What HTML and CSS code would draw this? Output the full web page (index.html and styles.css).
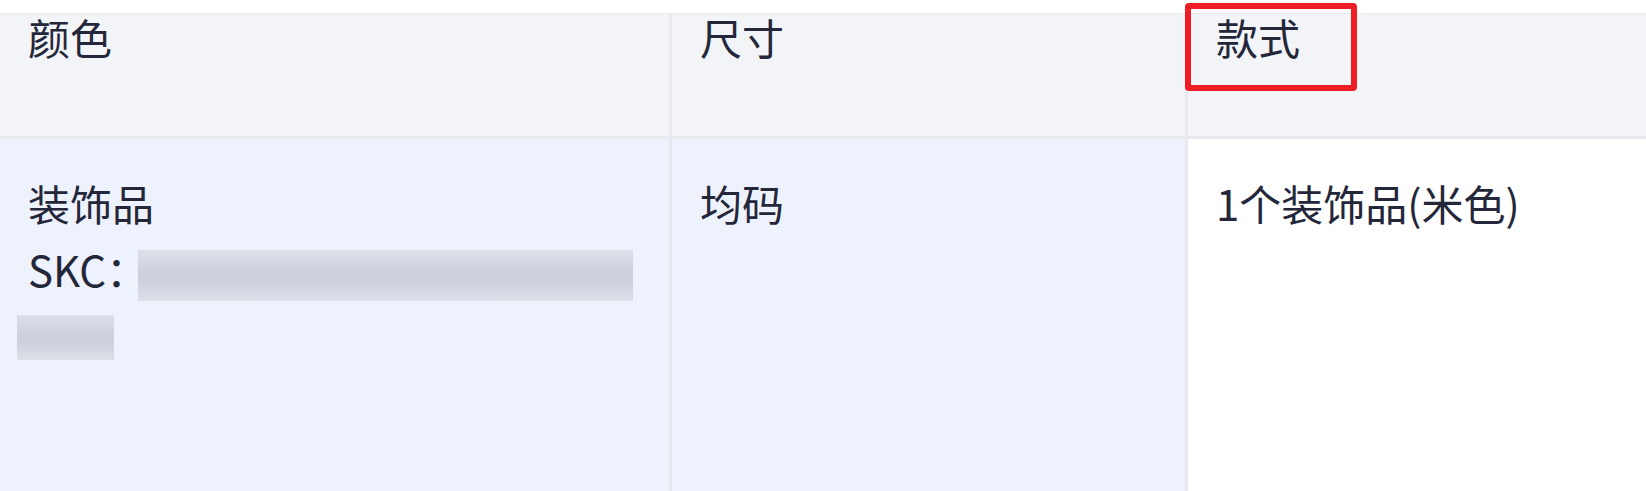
FILE: index.html
```html
<!DOCTYPE html>
<html lang="zh-CN">
<head>
<meta charset="utf-8">
<title>规格表</title>
<link rel="stylesheet" href="styles.css">
</head>
<body>
<div class="page">
  <div class="top-band"></div>
  <div class="table">
    <div class="cell head col-a">颜色</div>
    <div class="cell head col-b">尺寸</div>
    <div class="cell head col-c">款式</div>
    <div class="cell body col-a shaded">
      <div class="line">装饰品</div>
      <div class="line skc">SKC：<span class="blur blur-long"></span></div>
      <div class="line"><span class="blur blur-short"></span></div>
    </div>
    <div class="cell body col-b shaded">
      <div class="line">均码</div>
    </div>
    <div class="cell body col-c">
      <div class="line">1个装饰品(米色)</div>
    </div>
  </div>
  <div class="highlight"></div>
</div>
</body>
</html>
```
FILE: styles.css
```css
html, body {
  margin: 0;
  padding: 0;
  background: #ffffff;
}
.page {
  position: relative;
  width: 1646px;
  height: 491px;
  overflow: hidden;
  font-family: "Noto Sans CJK SC", "Noto Sans", sans-serif;
  color: #24273a;
}
.top-band {
  height: 13px;
  border-bottom: 1px solid #e9eaef;
  background: #ffffff;
}
.table {
  display: grid;
  grid-template-columns: 672px 516px 1fr;
  grid-template-rows: 125px 1fr;
  height: 477px;
}
.cell {
  box-sizing: border-box;
  padding-left: 28px;
  font-size: 42px;
}
.col-a, .col-b {
  border-right: 3px solid #e7e9ef;
}
.head {
  background: #f3f4f8;
  border-bottom: 3px solid #e7e9ef;
  line-height: 46px;
  padding-top: 0;
}
.body {
  background: #ffffff;
  padding-top: 31px;
  line-height: 66px;
}
.shaded {
  background: #eef2fd;
}
.line {
  height: 66px;
  white-space: nowrap;
}
.blur {
  display: inline-block;
  vertical-align: middle;
  background: linear-gradient(180deg, #dde0e9 0%, #ccd0dc 45%, #ccd0dc 60%, #dde0e9 100%);
}
.blur-long {
  width: 495px;
  height: 51px;
  margin-left: -10px;
  margin-top: 0;
}
.blur-short {
  width: 97px;
  height: 45px;
  margin-left: -11px;
  margin-top: -8px;
}
.highlight {
  position: absolute;
  left: 1185px;
  top: 3px;
  width: 172px;
  height: 88px;
  box-sizing: border-box;
  border: 6px solid #ee1c25;
  border-radius: 4px;
}
```
